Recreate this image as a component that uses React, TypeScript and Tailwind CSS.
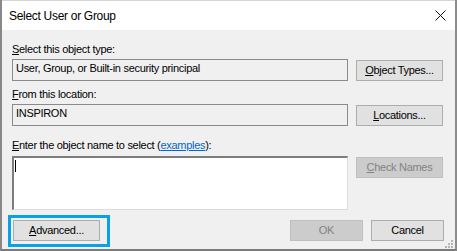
import React from "react";

const font = { fontFamily: '"Liberation Sans", Arial, sans-serif' };

function Btn({
  children,
  disabled,
  className = "",
}: {
  children: React.ReactNode;
  disabled?: boolean;
  className?: string;
}) {
  return (
    <div
      className={
        "h-[21px] flex items-center justify-center border text-[11px] leading-[13px] tracking-[-0.3px] " +
        (disabled
          ? "bg-[#cccccc] border-[#bfbfbf] text-[#838383] "
          : "bg-[#e1e1e1] border-[#adadad] text-black ") +
        className
      }
    >
      {children}
    </div>
  );
}

export default function App() {
  return (
    <div
      style={font}
      className="relative w-[457px] h-[251px] flex flex-col bg-[#f0f0f0] border-l-2 border-r-2 border-b-2 border-l-[#888888] border-r-[#8c8c8c] border-b-[#7a7a7a] overflow-hidden"
    >
      {/* title bar */}
      <div className="h-[30px] shrink-0 flex items-center justify-between bg-white border-t border-[#d4d4d4] pl-[7px] pr-[8px]">
        <span className="text-[12px] leading-[16px] tracking-[-0.3px] text-black">
          Select User or Group
        </span>
        <svg width="11" height="11" viewBox="0 0 11 11" className="mr-[1px]">
          <path d="M0.5 0.5 L10.5 10.5 M10.5 0.5 L0.5 10.5" stroke="#111" strokeWidth="1" />
        </svg>
      </div>

      {/* body */}
      <div className="flex-1 flex flex-col pl-[10px] pt-[13px] text-[11px] leading-[13px] tracking-[-0.3px] text-black">
        <div>
          <span className="underline">S</span>elect this object type:
        </div>
        <div className="mt-[3px] flex items-start gap-[8px]">
          <div className="w-[336px] h-[22px] border border-[#8a8a8a] bg-[#f0f0f0] pl-[3px] pt-[2px]">
            User, Group, or Built-in security principal
          </div>
          <Btn className="w-[87px] mt-[1px]">
            <span className="underline">O</span>bject Types...
          </Btn>
        </div>

        <div className="mt-[7px]">
          <span className="underline">F</span>rom this location:
        </div>
        <div className="mt-[3px] flex items-start gap-[8px]">
          <div className="w-[336px] h-[22px] border border-[#8a8a8a] bg-[#f0f0f0] pl-[3px] pt-[2px]">
            INSPIRON
          </div>
          <Btn className="w-[87px] mt-[1px]">
            <span className="underline">L</span>ocations...
          </Btn>
        </div>

        <div className="mt-[13px]">
          <span className="underline">E</span>nter the object name to select (
          <span className="text-[#0066cc] underline">examples</span>):
        </div>
        <div className="mt-[4px] flex items-start gap-[8px]">
          <div className="w-[336px] h-[54px] bg-white border-t-2 border-l-2 border-r border-b border-t-[#7d7d7d] border-l-[#7d7d7d] border-r-[#dcdcdc] border-b-[#dcdcdc] pl-[1px] pt-[2px]">
            <div className="w-px h-[12px] bg-black" />
          </div>
          <Btn disabled className="w-[87px] mt-[1px] h-[20px]">
            <span className="underline">C</span>heck Names
          </Btn>
        </div>

        <div className="mt-[10px] flex items-start">
          <Btn className="w-[87px] ml-[1px]">
            <span className="underline">A</span>dvanced...
          </Btn>
          <Btn disabled className="w-[73px] ml-[190px]">
            OK
          </Btn>
          <Btn className="w-[73px] ml-[8px]">Cancel</Btn>
        </div>
      </div>

      {/* highlight annotation around Advanced */}
      <div className="absolute left-[6px] top-[215px] w-[102px] h-[32px] border-[3px] border-[#0aa2e6] pointer-events-none" />

      {/* size grip */}
      <svg width="9" height="9" viewBox="0 0 9 9" className="absolute right-[1px] bottom-[0px]">
        <rect x="6" y="0" width="2" height="2" fill="#b5b5b5" />
        <rect x="3" y="3" width="2" height="2" fill="#b5b5b5" />
        <rect x="6" y="3" width="2" height="2" fill="#b5b5b5" />
        <rect x="0" y="6" width="2" height="2" fill="#b5b5b5" />
        <rect x="3" y="6" width="2" height="2" fill="#b5b5b5" />
        <rect x="6" y="6" width="2" height="2" fill="#b5b5b5" />
      </svg>
    </div>
  );
}
